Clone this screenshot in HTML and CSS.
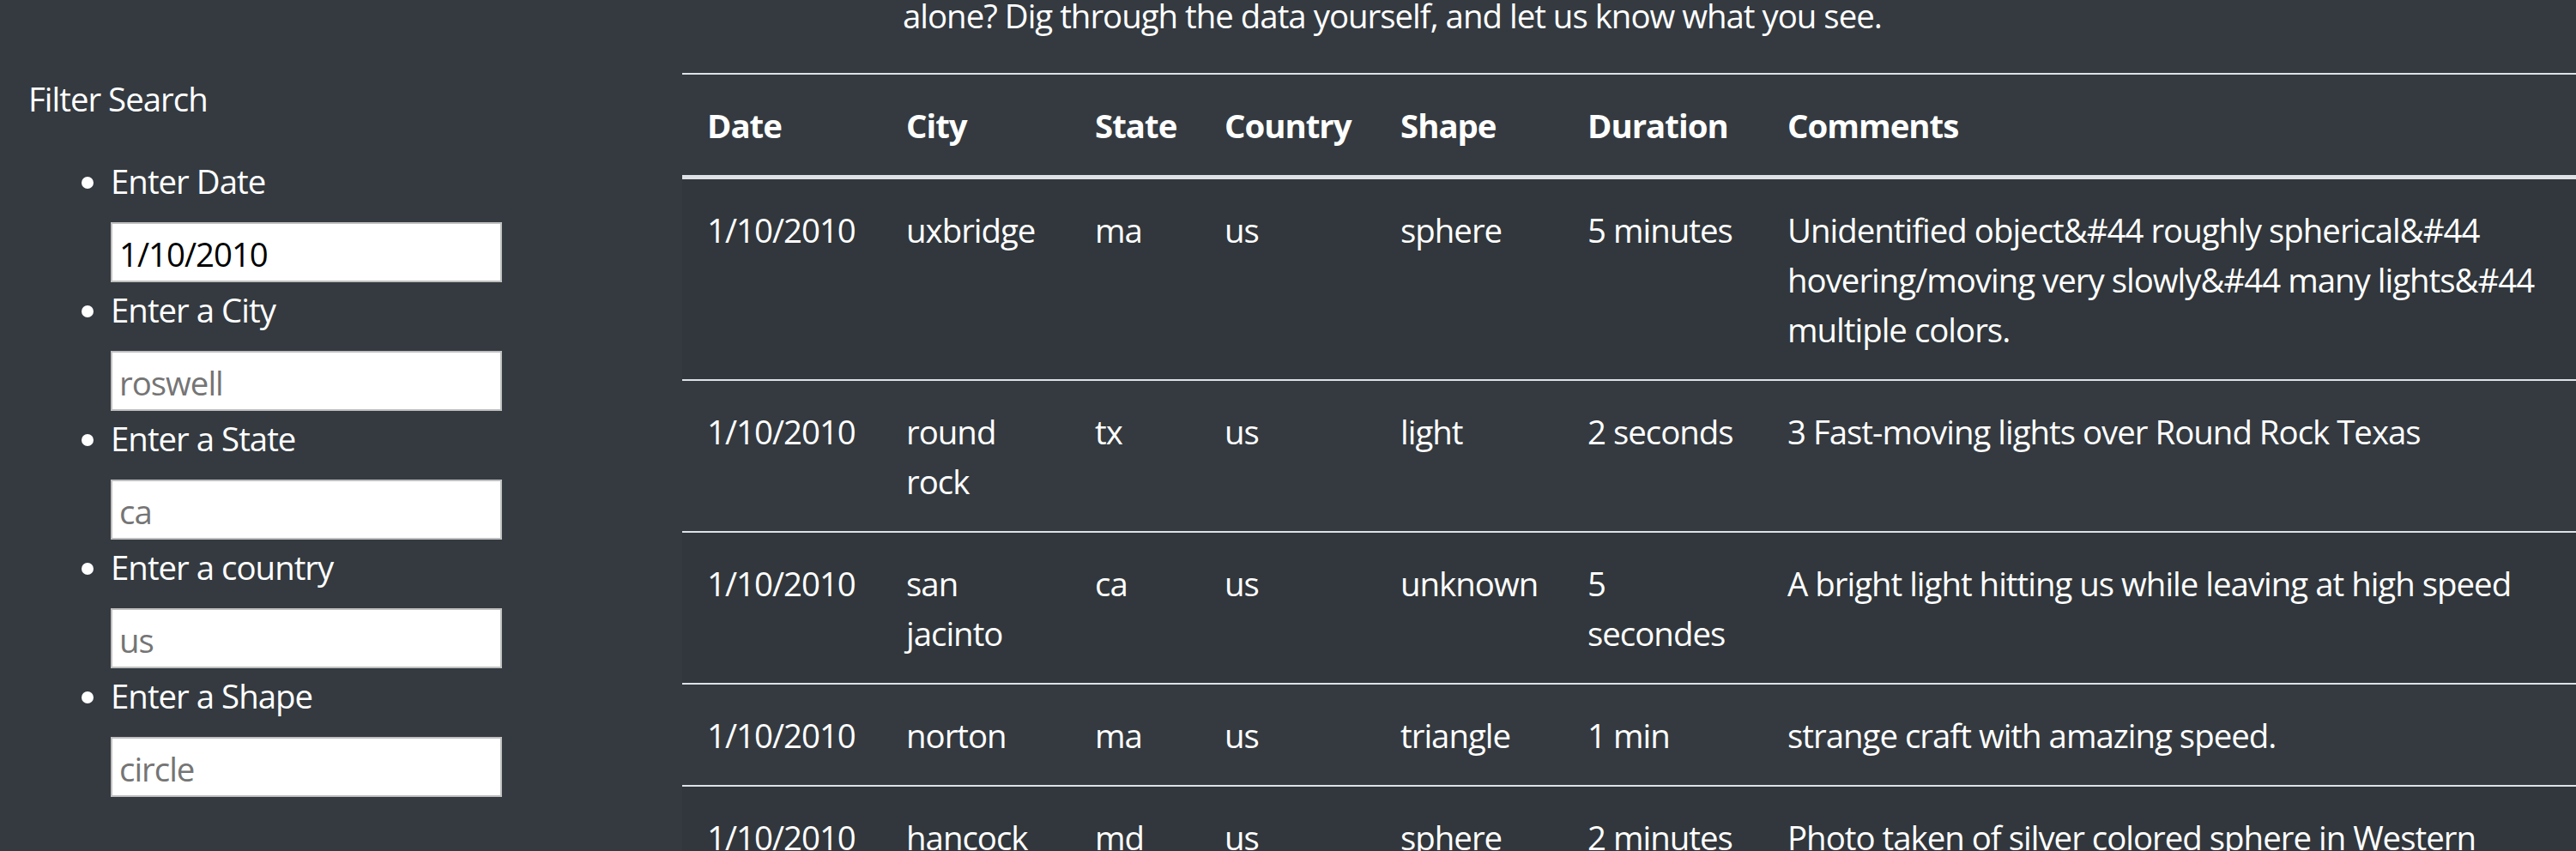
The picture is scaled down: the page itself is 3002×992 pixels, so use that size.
FILE: index.html
```html
<!DOCTYPE html>
<html lang="en">
<head>
<meta charset="utf-8">
<title>UFO Sightings</title>
<link rel="stylesheet" href="styles.css">
</head>
<body>
<div class="layout">
  <aside class="sidebar">
    <h5 class="sidebar-title">Filter Search</h5>
    <ul class="filters">
      <li class="filter">
        <label for="datetime">Enter Date</label>
        <input id="datetime" type="text" value="1/10/2010" placeholder="1/11/2011">
      </li>
      <li class="filter">
        <label for="city">Enter a City</label>
        <input id="city" type="text" placeholder="roswell">
      </li>
      <li class="filter">
        <label for="state">Enter a State</label>
        <input id="state" type="text" placeholder="ca">
      </li>
      <li class="filter">
        <label for="country">Enter a country</label>
        <input id="country" type="text" placeholder="us">
      </li>
      <li class="filter">
        <label for="shape">Enter a Shape</label>
        <input id="shape" type="text" placeholder="circle">
      </li>
    </ul>
  </aside>
  <main class="main">
    <p class="intro">alone? Dig through the data yourself, and let us know what you see.</p>
    <table class="ufo-table">
      <colgroup>
        <col class="c-date">
        <col class="c-city">
        <col class="c-state">
        <col class="c-country">
        <col class="c-shape">
        <col class="c-duration">
        <col class="c-comments">
      </colgroup>
      <thead>
        <tr>
          <th>Date</th>
          <th>City</th>
          <th>State</th>
          <th>Country</th>
          <th>Shape</th>
          <th>Duration</th>
          <th>Comments</th>
        </tr>
      </thead>
      <tbody>
        <tr>
          <td>1/10/2010</td>
          <td>uxbridge</td>
          <td>ma</td>
          <td>us</td>
          <td>sphere</td>
          <td>5 minutes</td>
          <td class="comment">Unidentified object&amp;#44 roughly spherical&amp;#44<br>hovering/moving very slowly&amp;#44 many lights&amp;#44<br>multiple colors.</td>
        </tr>
        <tr>
          <td>1/10/2010</td>
          <td>round rock</td>
          <td>tx</td>
          <td>us</td>
          <td>light</td>
          <td>2 seconds</td>
          <td class="comment">3 Fast-moving lights over Round Rock Texas</td>
        </tr>
        <tr>
          <td>1/10/2010</td>
          <td>san jacinto</td>
          <td>ca</td>
          <td>us</td>
          <td>unknown</td>
          <td>5 secondes</td>
          <td class="comment">A bright light hitting us while leaving at high speed</td>
        </tr>
        <tr>
          <td>1/10/2010</td>
          <td>norton</td>
          <td>ma</td>
          <td>us</td>
          <td>triangle</td>
          <td>1 min</td>
          <td class="comment">strange craft with amazing speed.</td>
        </tr>
        <tr>
          <td>1/10/2010</td>
          <td>hancock</td>
          <td>md</td>
          <td>us</td>
          <td>sphere</td>
          <td>2 minutes</td>
          <td class="comment">Photo taken of silver colored sphere in Western<br>Maryland.</td>
        </tr>
      </tbody>
    </table>
  </main>
</div>
</body>
</html>
```

FILE: styles.css
```css
html,
body {
  margin: 0;
  padding: 0;
}

body {
  background: #343a40;
  color: #fff;
  font-family: "Open Sans", "Noto Sans", "DejaVu Sans", sans-serif;
  font-size: 38.4px;
  line-height: 58px;
  letter-spacing: -0.026em;
  overflow: hidden;
}

.layout {
  display: flex;
  align-items: flex-start;
}

/* ---------- sidebar ---------- */
.sidebar {
  flex: 0 0 795px;
  box-sizing: border-box;
  padding: 86px 0 0 33px;
}

.sidebar-title {
  margin: 0;
  font-size: inherit;
  font-weight: 400;
  line-height: 58px;
}

.filters {
  margin: 38.4px 0 0;
  padding-left: 96px;
  list-style: disc;
}

.filter label {
  display: block;
  margin-bottom: 19px;
}

.filter input {
  display: block;
  box-sizing: border-box;
  width: 456px;
  height: 70px;
  margin: 0 0 3px;
  padding: 4px 8px 0;
  border: 2px solid #bfbfbf;
  border-radius: 0;
  background: #fff;
  color: #000;
  font-family: inherit;
  font-size: 38.4px;
  letter-spacing: inherit;
  line-height: normal;
  outline: none;
}

.filter input::placeholder {
  color: #757575;
  opacity: 1;
}

/* ---------- main ---------- */
.main {
  flex: 1;
  min-width: 0;
}

.intro {
  margin: -11px 0 38.4px 257px;
}

.ufo-table {
  width: 100%;
  border-collapse: collapse;
  table-layout: fixed;
}

.c-date { width: 232px; }
.c-city { width: 220px; }
.c-state { width: 151px; }
.c-country { width: 205px; }
.c-shape { width: 218px; }
.c-duration { width: 233px; }

.ufo-table th,
.ufo-table td {
  padding: 29.5px 29px;
  text-align: left;
  vertical-align: top;
  border-top: 2px solid #dee2e6;
}

.ufo-table th {
  font-weight: 700;
}

.ufo-table thead th {
  border-bottom: 5px solid #dee2e6;
}

.ufo-table tbody tr:nth-child(odd) {
  background: rgba(0, 0, 0, 0.05);
}

.ufo-table .comment {
  white-space: nowrap;
}
```
